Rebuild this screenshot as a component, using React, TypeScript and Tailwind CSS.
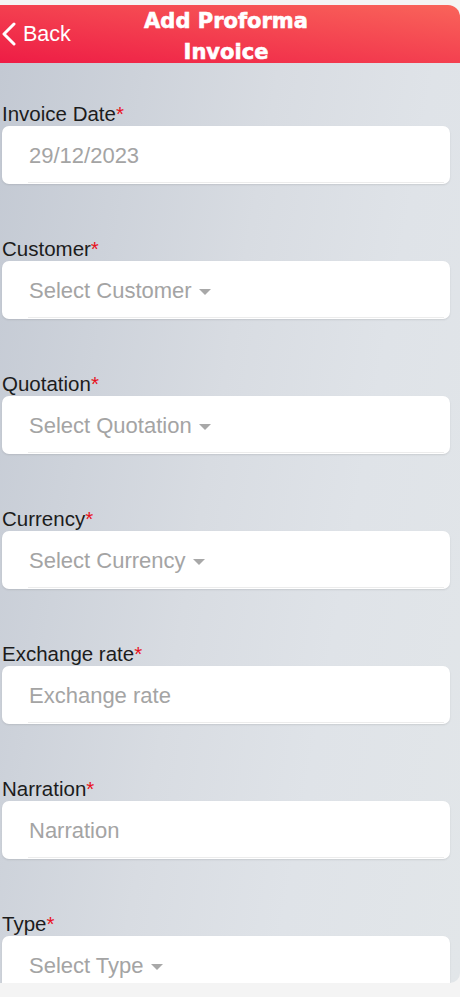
import React from 'react';

/**
 * Add Proforma Invoice - mobile form screen
 */

type Field = {
  label: string;
  value: string;
  select?: boolean;
};

const FIELDS: Field[] = [
  { label: 'Invoice Date', value: '29/12/2023' },
  { label: 'Customer', value: 'Select Customer', select: true },
  { label: 'Quotation', value: 'Select Quotation', select: true },
  { label: 'Currency', value: 'Select Currency', select: true },
  { label: 'Exchange rate', value: 'Exchange rate' },
  { label: 'Narration', value: 'Narration' },
  { label: 'Type', value: 'Select Type', select: true },
];

function BackChevron() {
  return (
    <svg width="16" height="24" viewBox="0 0 16 24" fill="none">
      <polyline
        points="13,2 3,12 13,22"
        stroke="white"
        strokeWidth="3"
        strokeLinecap="round"
        strokeLinejoin="round"
      />
    </svg>
  );
}

function Caret() {
  return (
    <svg width="12" height="6" viewBox="0 0 12 6" className="ml-[7px] mt-[3px]">
      <polygon points="0,0 12,0 6,6" fill="#a8a8a8" />
    </svg>
  );
}

function FormField({ field }: { field: Field }) {
  return (
    <div className="mb-[52px]">
      <div className="h-[23px] text-[20.5px] leading-[23px] text-[#1c1c1c] pl-[2px] pt-[1px]">
        {field.label}
        <span className="text-[#e8101c]">*</span>
      </div>
      <div className="relative mt-[2px] ml-[2px] mr-[10px] h-[58px] rounded-[7px] bg-white shadow-[0_1px_2px_rgba(0,0,0,0.10)] flex items-center pl-[27px]">
        <span className="text-[22px] text-[#a4a4a4]">{field.value}</span>
        {field.select && <Caret />}
        <div className="absolute left-[26px] right-[6px] bottom-[1px] border-b border-[#ececec]" />
      </div>
    </div>
  );
}

export default function App() {
  return (
    <div
      className="h-[997px] w-[460px] bg-[#f4f4f4] pt-[5px] pb-[14px] overflow-hidden"
      style={{ fontFamily: '"Liberation Sans", Arial, sans-serif' }}
    >
      <div className="flex h-full flex-col overflow-hidden rounded-tr-[12px] rounded-br-[10px]">
        <header className="flex h-[58px] shrink-0 items-start bg-[linear-gradient(to_top_right,#ee1c45,#f9645a)] text-white">
          <button className="flex w-[110px] items-center gap-[6px] pt-[17px] pl-[1px]">
            <BackChevron />
            <span className="text-[21.5px] leading-[24px]">Back</span>
          </button>
          <h1
            className="flex-1 pt-[1px] text-center text-[21px] font-bold leading-[31px] [-webkit-text-stroke:0.6px_white]"
            style={{ fontFamily: '"DejaVu Sans", Verdana, sans-serif' }}
          >
            Add Proforma Invoice
          </h1>
          <div className="w-[118px]" />
        </header>

        <main className="flex-1 overflow-hidden bg-[linear-gradient(100deg,#c3c9d3_0%,#d8dce2_45%,#dfe3e8_70%,#e2e6e9_100%)] pt-[38px]">
          {FIELDS.map((f) => (
            <FormField key={f.label} field={f} />
          ))}
        </main>
      </div>
    </div>
  );
}
